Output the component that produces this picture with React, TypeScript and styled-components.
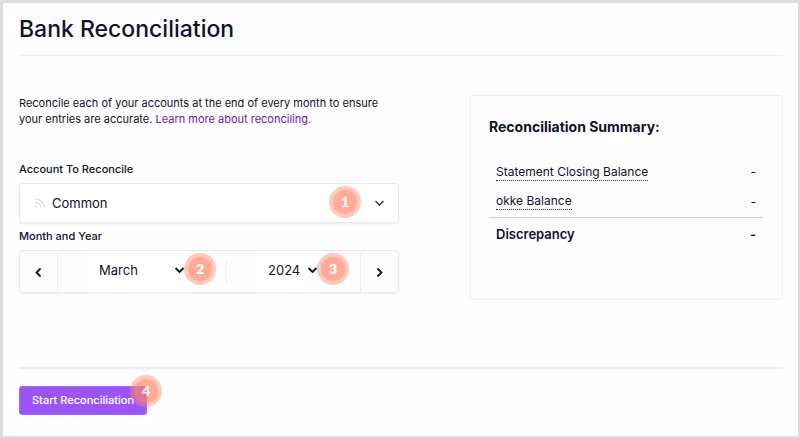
import React, { useState } from "react";
import styled, { createGlobalStyle } from "styled-components";

const GlobalStyle = createGlobalStyle`
  *, *::before, *::after { box-sizing: border-box; }
  body {
    margin: 0;
    background: #fdfdff;
    color: #11112b;
    font-family: Inter, "Liberation Sans", sans-serif;
    font-size: 12px;
    line-height: 16px;
  }
  button, select { font: inherit; color: inherit; }
`;

const Page = styled.main`
  display: flex;
  flex-direction: column;
  min-height: 100vh;
  padding: 12px 15px 21px 16px;
  border: solid #dcdcde;
  border-width: 3px 2px 2px 3px;
`;

const Header = styled.header`
  padding-bottom: 12px;
  border-bottom: 1px solid #f0f0f4;
`;

const Title = styled.h1`
  margin: 0;
  font-size: 23px;
  line-height: 28px;
  font-weight: 500;
`;

const Columns = styled.div`
  display: grid;
  grid-template-columns: 380fr 314fr;
  column-gap: 70px;
  padding: 39px 0 67px;
`;

const Form = styled.form`
  display: flex;
  flex-direction: column;
`;

const Intro = styled.p`
  margin: 0 0 34px;
  font-size: 11px;
`;

const HelpLink = styled.a`
  color: #6b21a8;
  text-decoration: none;
`;

const Label = styled.label`
  display: block;
  margin-bottom: 6px;
  font-size: 11px;
  line-height: 16px;
  font-weight: 500;
`;

const AccountField = styled.div`
  position: relative;
  margin-bottom: 5px;
`;

const SelectBox = styled.select<{ $kind: "account" | "period" }>`
  display: block;
  width: 100%;
  margin: 0;
  appearance: none;
  outline-color: #9b55f7;
  background: #ffffff;
  font-size: 13px;
  line-height: 20px;
  height: ${(p) => (p.$kind === "account" ? "40px" : "38px")};
  padding: ${(p) => (p.$kind === "account" ? "0 32px" : "0 13px")};
  border: ${(p) => (p.$kind === "account" ? "1px solid #e8e8ee" : "0")};
  border-radius: 3px;
  box-shadow: ${(p) => (p.$kind === "account" ? "0 1px 2px #ececf2" : "none")};
`;

const Mark = styled.span<{ $side: "left" | "right"; $offset: number }>`
  position: absolute;
  top: 50%;
  ${(p) => p.$side}: ${(p) => p.$offset}px;
  transform: translateY(-50%);
  display: flex;
  pointer-events: none;
`;

const PeriodPicker = styled.div`
  display: grid;
  grid-template-columns: 38px 169fr 133fr 38px;
  height: 43px;
  border: 1px solid #e8e8ee;
  border-radius: 4px;
  box-shadow: 0 1px 2px #f0f0f5;
`;

const StepButton = styled.button<{ $edge: "left" | "right" }>`
  display: flex;
  align-items: center;
  justify-content: center;
  padding: 2px 0 0;
  border: 0;
  border-${(p) => p.$edge}: 1px solid #ececf1;
  background: transparent;
`;

const PeriodCell = styled.div<{ $divided?: boolean }>`
  display: flex;
  align-items: flex-start;
  padding-left: 28px;
  background: ${(p) =>
    p.$divided
      ? "linear-gradient(#ececf1, #ececf1) right center / 1px 22px no-repeat"
      : "none"};
`;

const PeriodField = styled.div<{ $width: number }>`
  position: relative;
  width: ${(p) => p.$width}px;
`;

const Badge = styled.span<{ $right: number; $top: number }>`
  position: absolute;
  right: ${(p) => p.$right}px;
  top: ${(p) => p.$top}px;
  display: flex;
  width: 32px;
  height: 32px;
  padding: 4px;
  border-radius: 50%;
  background: rgba(255, 135, 106, 0.45);
  pointer-events: none;
`;

const BadgeCore = styled.span`
  flex: 1;
  border-radius: 50%;
  background: rgba(255, 135, 106, 0.44);
  color: #ffffff;
  font-family: Lato, "Noto Sans", sans-serif;
  font-size: 14px;
  line-height: 24px;
  font-weight: 900;
  text-align: center;
`;

const Summary = styled.section`
  padding: 21px 19px 49px;
  border: 1px solid #f0f0f4;
  border-radius: 3px;
`;

const SummaryTitle = styled.h2`
  margin: 0 0 20px;
  font-size: 14px;
  line-height: 20px;
  font-weight: 700;
`;

const SummaryTable = styled.table`
  width: 100%;
  border-collapse: collapse;
`;

const SummaryRow = styled.tr<{ $total?: boolean }>`
  border-top: ${(p) => (p.$total ? "1px solid #cfcfd8" : "0")};
  font-size: ${(p) => (p.$total ? "13px" : "12px")};
  th, td {
    height: ${(p) => (p.$total ? "33px" : "30px")};
    padding: 0 7px;
    text-align: left;
    font-weight: ${(p) => (p.$total ? 600 : 400)};
  }
  td { text-align: right; }
`;

const Term = styled.span`
  display: inline-block;
  border-bottom: 1px dotted #33334a;
`;

const Footer = styled.footer`
  padding-top: 17px;
  border-top: 2px solid #eeeef3;
`;

const StartWrap = styled.div`
  position: relative;
  display: inline-block;
`;

const StartButton = styled.button`
  display: block;
  padding: 6px 12px;
  border: 1px solid #a56af5;
  border-radius: 3px;
  background: #9b55f7;
  color: #ffffff;
  font-size: 11px;
  line-height: 15px;
  font-weight: 500;
`;

function Chevron({ dir, soft }: { dir: "down" | "left" | "right"; soft?: boolean }) {
  const d = {
    down: "M1.5 3.5 L5.5 7.5 L9.5 3.5",
    left: "M7.5 1.5 L3.5 5.5 L7.5 9.5",
    right: "M3.5 1.5 L7.5 5.5 L3.5 9.5",
  }[dir];
  return (
    <svg width="11" height="11" viewBox="0 0 11 11" fill="none" aria-hidden="true">
      <path d={d} stroke={soft ? "#44445a" : "#11112b"} strokeWidth={soft ? 1.6 : 1.8} />
    </svg>
  );
}

function FeedIcon() {
  return (
    <svg width="10" height="10" viewBox="0 0 10 10" fill="none" aria-hidden="true">
      <circle cx="1.5" cy="8.5" r="1.2" fill="#dddde8" />
      <path d="M0.5 4.3 A5.2 5.2 0 0 1 5.7 9.5 M0.5 1 A8.5 8.5 0 0 1 9 9.5" stroke="#dddde8" strokeWidth="1.4" />
    </svg>
  );
}

function Step({ n, right, top }: { n: number; right: number; top: number }) {
  return (
    <Badge $right={right} $top={top}>
      <BadgeCore>{n}</BadgeCore>
    </Badge>
  );
}

const MONTHS = [
  "January", "February", "March", "April", "May", "June",
  "July", "August", "September", "October", "November", "December",
];
const YEARS = [2022, 2023, 2024, 2025];

export default function App() {
  const [month, setMonth] = useState(2);
  const [year, setYear] = useState(2024);

  const shift = (by: number) => {
    const total = year * 12 + month + by;
    const nextYear = Math.floor(total / 12);
    if (!YEARS.includes(nextYear)) return;
    setYear(nextYear);
    setMonth(total % 12);
  };

  return (
    <>
      <GlobalStyle />
      <Page>
        <Header>
          <Title>Bank Reconciliation</Title>
        </Header>
        <Columns>
          <Form id="reconcile" onSubmit={(e) => e.preventDefault()}>
            <Intro>
              Reconcile each of your accounts at the end of every month to ensure your entries are
              accurate. <HelpLink href="#reconciling">Learn more about reconciling.</HelpLink>
            </Intro>
            <Label htmlFor="account">Account To Reconcile</Label>
            <AccountField>
              <SelectBox id="account" $kind="account">
                <option>Common</option>
              </SelectBox>
              <Mark $side="left" $offset={16}><FeedIcon /></Mark>
              <Mark $side="right" $offset={14}><Chevron dir="down" soft /></Mark>
              <Step n={1} right={38} top={3} />
            </AccountField>
            <Label htmlFor="month">Month and Year</Label>
            <PeriodPicker>
              <StepButton type="button" $edge="right" aria-label="Previous month" onClick={() => shift(-1)}>
                <Chevron dir="left" />
              </StepButton>
              <PeriodCell $divided>
                <PeriodField $width={104}>
                  <SelectBox id="month" $kind="period" value={month} onChange={(e) => setMonth(Number(e.target.value))}>
                    {MONTHS.map((name, i) => <option key={name} value={i}>{name}</option>)}
                  </SelectBox>
                  <Mark $side="right" $offset={5}><Chevron dir="down" /></Mark>
                  <Step n={2} right={-26} top={2} />
                </PeriodField>
              </PeriodCell>
              <PeriodCell>
                <PeriodField $width={68}>
                  <SelectBox aria-label="Year" $kind="period" value={year} onChange={(e) => setYear(Number(e.target.value))}>
                    {YEARS.map((y) => <option key={y}>{y}</option>)}
                  </SelectBox>
                  <Mark $side="right" $offset={5}><Chevron dir="down" /></Mark>
                  <Step n={3} right={-26} top={2} />
                </PeriodField>
              </PeriodCell>
              <StepButton type="button" $edge="left" aria-label="Next month" onClick={() => shift(1)}>
                <Chevron dir="right" />
              </StepButton>
            </PeriodPicker>
          </Form>
          <Summary>
            <SummaryTitle>Reconciliation Summary:</SummaryTitle>
            <SummaryTable>
              <tbody>
                <SummaryRow>
                  <th scope="row"><Term>Statement Closing Balance</Term></th>
                  <td>-</td>
                </SummaryRow>
                <SummaryRow>
                  <th scope="row"><Term>okke Balance</Term></th>
                  <td>-</td>
                </SummaryRow>
                <SummaryRow $total>
                  <th scope="row">Discrepancy</th>
                  <td>-</td>
                </SummaryRow>
              </tbody>
            </SummaryTable>
          </Summary>
        </Columns>
        <Footer>
          <StartWrap>
            <StartButton type="submit" form="reconcile">Start Reconciliation</StartButton>
            <Step n={4} right={-15} top={-11} />
          </StartWrap>
        </Footer>
      </Page>
    </>
  );
}
